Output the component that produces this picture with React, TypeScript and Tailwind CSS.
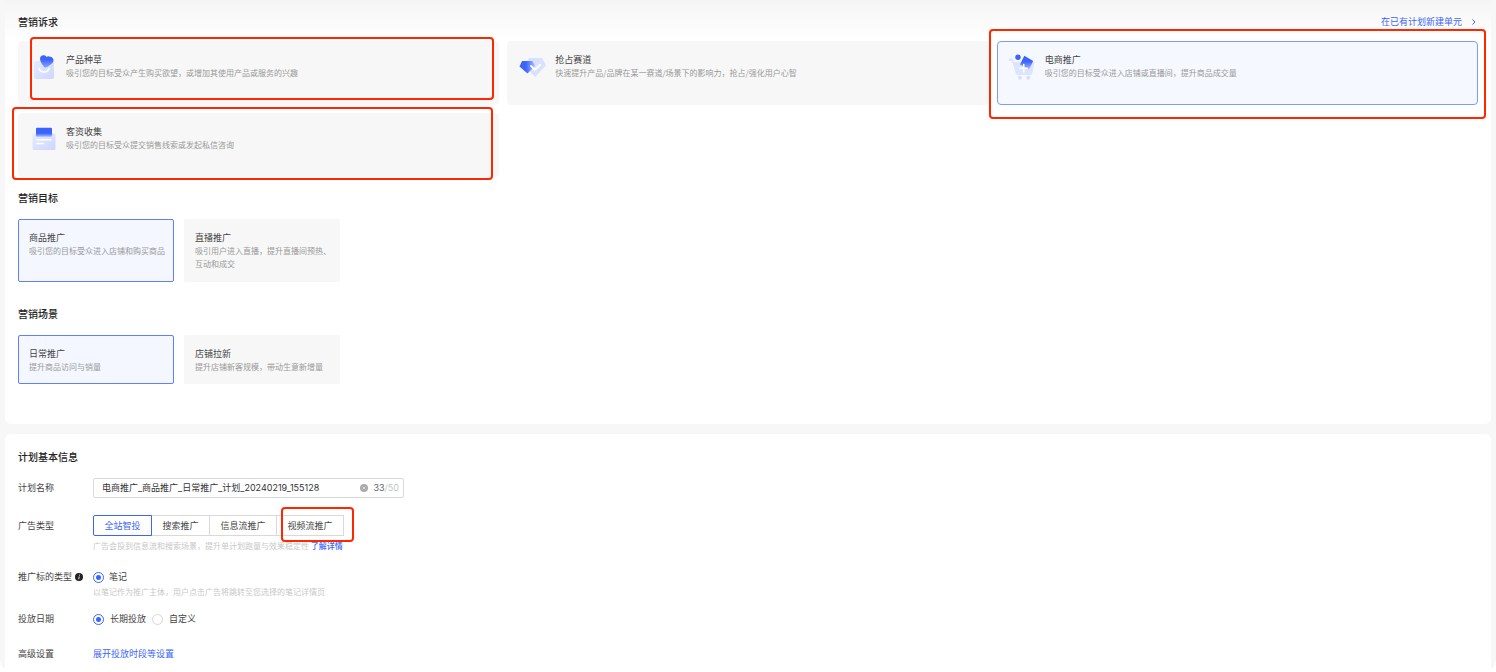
import React, { useState } from "react";
import clsx from "clsx";

function SeedIcon() {
  return (
    <svg viewBox="0 0 28 28" className="size-7 shrink-0" aria-hidden="true">
      <defs>
        <linearGradient id="seed-heart" x1="0" y1="0" x2="0" y2="1">
          <stop offset="0.35" stopColor="#3a64fb" />
          <stop offset="1" stopColor="#8ba4fd" />
        </linearGradient>
        <linearGradient id="seed-box" x1="0" y1="0" x2="1" y2="1">
          <stop offset="0" stopColor="#e6ebfe" />
          <stop offset="1" stopColor="#cdd7fd" />
        </linearGradient>
      </defs>
      <rect x="4" y="8" width="20" height="18" rx="2" fill="url(#seed-box)" />
      <path
        d="M10.2 4.600C10.800 2.400 13.200 1.600 15 2.600c.700.300 1.200.800 1.500 1.300.700-.400 1.700-.700 2.700-.500 3.200.300 4.800 2.500 4.200 4.800-.6 2.300-4.200 4.500-7 6.100-.9.500-1.600.300-2.300-.400C12 11.600 9.400 7.400 10.200 4.600Z"
        fill="url(#seed-heart)"
      />
      <path d="M9 15.500c1.500 4.500 8.500 4.500 10 0" fill="none" stroke="#fff" strokeWidth="1.600" strokeLinecap="round" />
    </svg>
  );
}

function TrackIcon() {
  return (
    <svg viewBox="0 0 28 28" className="size-7 shrink-0" aria-hidden="true">
      <defs>
        <linearGradient id="track-dark" x1="0" y1="0" x2="1" y2="0">
          <stop offset="0.4" stopColor="#3a64fb" />
          <stop offset="1" stopColor="#a9bbfd" />
        </linearGradient>
      </defs>
      <path d="M10 5h13l4 7.500L16 24 5.500 12.500Z" fill="#d9e1fe" />
      <path d="M3 8h10.500l2.500 5-7.500 7.500L.500 13.500Z" fill="url(#track-dark)" />
      <path d="m12 13 4 3.800 5-5" fill="none" stroke="#fff" strokeWidth="1.900" strokeLinecap="round" strokeLinejoin="round" />
    </svg>
  );
}

function CartIcon() {
  return (
    <svg viewBox="0 0 28 28" className="size-7 shrink-0" aria-hidden="true">
      <defs>
        <linearGradient id="cart-box" x1="0" y1="0" x2="0" y2="1">
          <stop offset="0.400" stopColor="#3a64fb" />
          <stop offset="1" stopColor="#a9bbfd" />
        </linearGradient>
      </defs>
      <path d="M0 5.500h3.500L5 9h20.500l-2.200 11.500a2 2 0 0 1-2 1.500H8.800a2 2 0 0 1-2-1.500L3 8H0Z" fill="#dce4fe" />
      <path d="m15.300 2.800 8.900 5.200-4.300 8.500-8.900-5Z" fill="url(#cart-box)" />
      <circle cx="9" cy="4.300" r="2.700" fill="#3a64fb" />
      <path d="M11 15.200h7.500M14.700 11.500V19" stroke="#fff" strokeWidth="1.600" strokeLinecap="round" />
      <circle cx="11" cy="24.700" r="1.900" fill="#d5defe" />
      <circle cx="19.200" cy="24.700" r="1.900" fill="#d5defe" />
    </svg>
  );
}

function LeadsIcon() {
  return (
    <svg viewBox="0 0 28 28" className="size-7 shrink-0" aria-hidden="true">
      <defs>
        <linearGradient id="leads-sheet" x1="0" y1="0" x2="1" y2="1">
          <stop offset="0" stopColor="#e6ebfe" />
          <stop offset="1" stopColor="#cdd7fd" />
        </linearGradient>
        <linearGradient id="leads-card" x1="0" y1="0" x2="0" y2="1">
          <stop offset="0.600" stopColor="#3a64fb" />
          <stop offset="1" stopColor="#a9bbfd" />
        </linearGradient>
      </defs>
      <rect x="2.500" y="8.500" width="23" height="16.500" rx="1.200" fill="url(#leads-sheet)" />
      <rect x="6" y="2.800" width="16" height="9" rx="1" fill="url(#leads-card)" />
      <path d="M7 14.700h14M7 18.500h6.500" stroke="#fff" strokeWidth="1.500" strokeLinecap="round" />
    </svg>
  );
}

type Demand = { title: string; desc: string; icon: React.ReactNode; mark?: string };

const demands: Demand[] = [
  {
    title: "产品种草",
    desc: "吸引您的目标受众产生购买欲望，或增加其使用产品或服务的兴趣",
    icon: <SeedIcon />,
    mark: "left-3 right-[5px] -top-1 bottom-[5px]",
  },
  { title: "抢占赛道", desc: "快速提升产品/品牌在某一赛道/场景下的影响力，抢占/强化用户心智", icon: <TrackIcon /> },
  {
    title: "电商推广",
    desc: "吸引您的目标受众进入店铺或直播间，提升商品成交量",
    icon: <CartIcon />,
    mark: "-inset-x-2 -top-3 -bottom-[14px]",
  },
  {
    title: "客资收集",
    desc: "吸引您的目标受众提交销售线索或发起私信咨询",
    icon: <LeadsIcon />,
    mark: "-left-[6px] right-[6px] -top-[6px] -bottom-[3px]",
  },
];

const goals = [
  { title: "商品推广", desc: "吸引您的目标受众进入店铺和购买商品" },
  { title: "直播推广", desc: "吸引用户进入直播，提升直播间预热、互动和成交" },
];

const scenes = [
  { title: "日常推广", desc: "提升商品访问与销量" },
  { title: "店铺拉新", desc: "提升店铺新客规模，带动生意新增量" },
];

const adTypes = ["全站智投", "搜索推广", "信息流推广", "视频流推广"];

function Mark({ className }: { className: string }) {
  return <span className={clsx("pointer-events-none absolute z-10 rounded border-2 border-[#ff2600]", className)} />;
}

function CardText({ title, desc }: { title: string; desc: string }) {
  return (
    <span className="block">
      <span className="block text-[9px] leading-[13px] text-[#444]">{title}</span>
      <span className="block text-[8px] leading-[13px] text-[#999]">{desc}</span>
    </span>
  );
}

function Options({
  items,
  height,
}: {
  items: { title: string; desc: string }[];
  height: string;
}) {
  const [active, setActive] = useState(0);
  return (
    <div className="mt-[11px] flex gap-[10px]">
      {items.map((item, i) => (
        <button
          key={item.title}
          type="button"
          aria-pressed={i === active}
          onClick={() => setActive(i)}
          className={clsx(
            "flex w-[156px] items-start rounded-xs border pt-[11px] pr-1 pl-[10px] text-left",
            height,
            i === active ? "border-[#5f80f7] bg-[#f4f7ff]" : "border-[#f7f7f7] bg-[#f7f7f7]",
          )}
        >
          <CardText {...item} />
        </button>
      ))}
    </div>
  );
}

function Heading({ children }: { children: React.ReactNode }) {
  return <h2 className="text-[10px] leading-5 font-medium text-[#222]">{children}</h2>;
}

const radio =
  "size-[11px] shrink-0 appearance-none rounded-full border border-[#d9d9d9] bg-white checked:border-[#3a64fb] checked:bg-[radial-gradient(circle,#3a64fb_0_2px,#fff_3px)]";

export default function App() {
  const [demand, setDemand] = useState(2);
  const [adType, setAdType] = useState(0);
  const [name, setName] = useState("电商推广_商品推广_日常推广_计划_20240219_155128");
  const [schedule, setSchedule] = useState("long");

  return (
    <main className="overflow-hidden rounded-b-xl bg-[#f7f7f7] px-[5px] font-['Noto_Sans_CJK_SC',sans-serif] text-[9px] text-[#444]">
      <section className="rounded-b-md bg-white bg-linear-to-b from-[#f5f5f5] to-white to-[40px] px-[13px] pt-[11px] pb-10">
        <div className="flex items-center justify-between">
          <Heading>营销诉求</Heading>
          <a href="#units" className="flex items-center gap-2 leading-[22px] text-[#3a64fb]">
            在已有计划新建单元
            <svg viewBox="0 0 8 8" className="size-2" aria-hidden="true">
              <path d="m2.500 1.500 2.500 2.500-2.500 2.500" fill="none" stroke="currentColor" />
            </svg>
          </a>
        </div>
        <div className="mt-2 grid grid-cols-3 gap-2">
          {demands.map((item, i) => (
            <div key={item.title} className="relative">
              <button
                type="button"
                aria-pressed={i === demand}
                onClick={() => setDemand(i)}
                className={clsx(
                  "flex h-16 w-full items-start gap-2 rounded border px-[11px] pt-[11px] text-left",
                  i === demand ? "border-[#7f9bfa] bg-[#f6f8ff]" : "border-[#f7f7f7] bg-[#f7f7f7]",
                )}
              >
                {item.icon}
                <CardText title={item.title} desc={item.desc} />
              </button>
              {item.mark && <Mark className={item.mark} />}
            </div>
          ))}
        </div>
        <div className="mt-[11px]">
          <Heading>营销目标</Heading>
          <Options items={goals} height="h-[63px]" />
        </div>
        <div className="mt-[22px]">
          <Heading>营销场景</Heading>
          <Options items={scenes} height="h-[49px]" />
        </div>
      </section>

      <section className="mt-[10px] rounded-t-md bg-white px-[13px] pt-[13px] pb-2">
        <Heading>计划基本信息</Heading>
        <form onSubmit={(e) => e.preventDefault()}>
          <div className="mt-[11px] flex items-center">
            <label htmlFor="plan-name" className="w-[75px]">
              计划名称
            </label>
            <div className="flex h-5 w-[311px] items-center rounded-xs border border-[#d9d9d9] pr-1 pl-2 font-[Inter,'Noto_Sans_CJK_SC',sans-serif]">
              <input
                id="plan-name"
                value={name}
                maxLength={50}
                onChange={(e) => setName(e.target.value)}
                className="min-w-0 flex-1 bg-transparent text-[#333] outline-none"
              />
              <button type="button" aria-label="清空" onClick={() => setName("")} className="mr-[5px]">
                <svg viewBox="0 0 8 8" className="size-2" aria-hidden="true">
                  <circle cx="4" cy="4" r="4" fill="#aaa" />
                  <path d="m2.700 2.700 2.600 2.600m0-2.600L2.700 5.300" stroke="#e8e8e8" strokeWidth="0.800" />
                </svg>
              </button>
              <span className="text-[#c4c4c4]">
                <span className="text-[#666]">33</span>/50
              </span>
            </div>
          </div>

          <div className="mt-[17px] flex">
            <span className="w-[75px] leading-[22px]">广告类型</span>
            <div>
              <div className="relative flex w-fit">
                {adTypes.map((type, i) => (
                  <button
                    key={type}
                    type="button"
                    aria-pressed={i === adType}
                    onClick={() => setAdType(i)}
                    className={clsx(
                      "h-[21px] border first:rounded-l-xs last:rounded-r-xs not-first:-ml-px",
                      type.length > 4 ? "w-[68px]" : "w-[59px]",
                      i === adType ? "z-1 border-[#3a64fb] text-[#3a64fb]" : "border-[#d9d9d9]",
                    )}
                  >
                    {type}
                  </button>
                ))}
                <Mark className="-top-2 -right-[10px] -bottom-[6px] w-[73px]" />
              </div>
              <p className="mt-1 text-[8px] leading-3 text-[#c8c8c8]">
                广告会投到信息流和搜索场景，提升单计划跑量与效果稳定性{" "}
                <a href="#details" className="font-medium text-[#3a64fb]">
                  了解详情
                </a>
              </p>
            </div>
          </div>

          <div className="mt-4 flex">
            <span className="flex h-[18px] w-[75px] items-center gap-[3px]">
              推广标的类型
              <svg viewBox="0 0 8 8" className="size-2" aria-hidden="true">
                <circle cx="4" cy="4" r="4" fill="#222" />
                <path d="M4.500 1.700v.900M4.200 3.500 3.700 6.200" stroke="#fff" strokeWidth="0.900" />
              </svg>
            </span>
            <div>
              <label className="flex h-[18px] items-center gap-[5px]">
                <input type="radio" name="target" defaultChecked className={radio} />
                笔记
              </label>
              <p className="text-[8px] leading-3 text-[#c8c8c8]">
                以笔记作为推广主体，用户点击广告将跳转至您选择的笔记详情页
              </p>
            </div>
          </div>

          <div className="mt-3 flex h-[18px] items-center">
            <span className="w-[75px]">投放日期</span>
            <div className="flex gap-[6px]">
              <label className="flex items-center gap-[6px]">
                <input
                  type="radio"
                  name="schedule"
                  checked={schedule === "long"}
                  onChange={() => setSchedule("long")}
                  className={radio}
                />
                长期投放
              </label>
              <label className="flex items-center gap-[6px]">
                <input
                  type="radio"
                  name="schedule"
                  checked={schedule === "custom"}
                  onChange={() => setSchedule("custom")}
                  className={radio}
                />
                自定义
              </label>
            </div>
          </div>

          <div className="mt-[17px] flex h-[18px] items-center">
            <span className="w-[75px]">高级设置</span>
            <button type="button" className="text-[#3a64fb]">
              展开投放时段等设置
            </button>
          </div>
        </form>
      </section>
    </main>
  );
}
